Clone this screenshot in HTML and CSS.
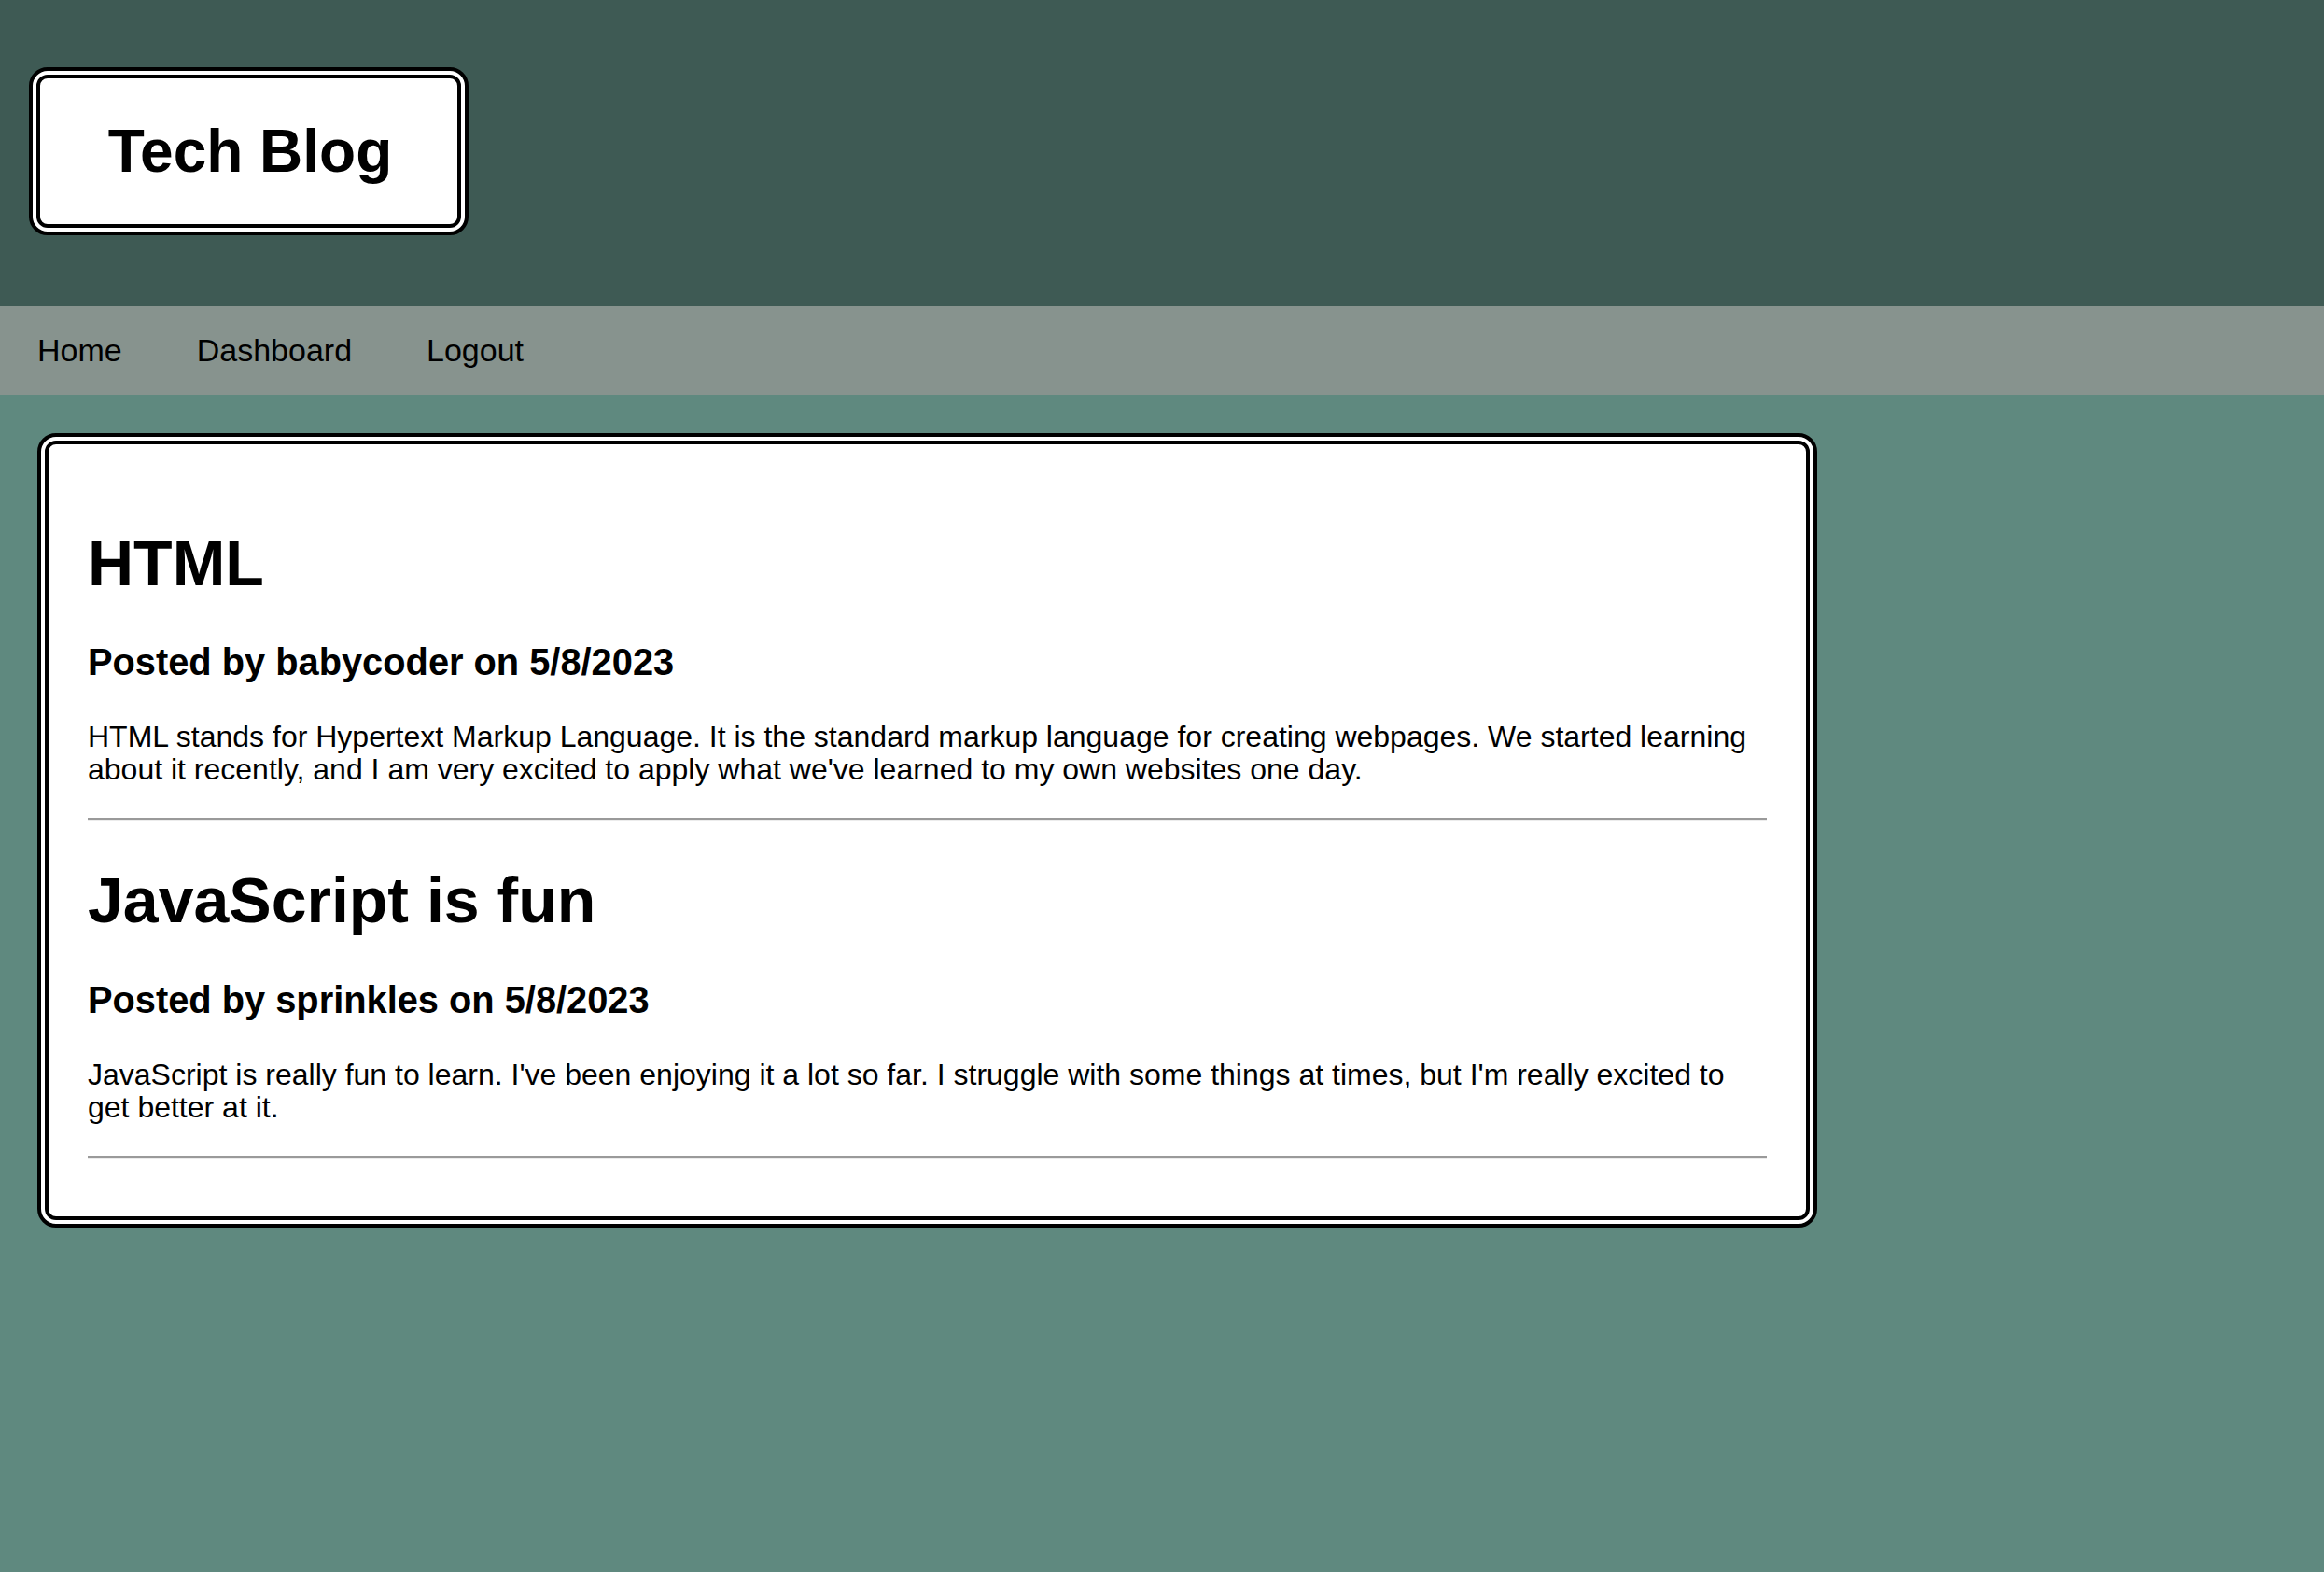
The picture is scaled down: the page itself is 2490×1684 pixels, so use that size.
FILE: index.html
```html
<!DOCTYPE html>
<html lang="en">
<head>
<meta charset="utf-8">
<title>Tech Blog</title>
<link rel="stylesheet" href="styles.css">
</head>
<body>
<header class="site-header">
  <div class="logo-box"><h1 class="logo">Tech Blog</h1></div>
</header>
<nav class="site-nav">
  <a href="#" class="nav-link">Home</a>
  <a href="#" class="nav-link">Dashboard</a>
  <a href="#" class="nav-link">Logout</a>
</nav>
<main class="main">
  <section class="card">
    <article class="post">
      <h1 class="post-title">HTML</h1>
      <h3 class="post-meta">Posted by babycoder on 5/8/2023</h3>
      <p class="post-body">HTML stands for Hypertext Markup Language. It is the standard markup language for creating webpages. We started learning about it recently, and I am very excited to apply what we've learned to my own websites one day.</p>
      <hr class="divider">
    </article>
    <article class="post">
      <h1 class="post-title">JavaScript is fun</h1>
      <h3 class="post-meta">Posted by sprinkles on 5/8/2023</h3>
      <p class="post-body">JavaScript is really fun to learn. I've been enjoying it a lot so far. I struggle with some things at times, but I'm really excited to get better at it.</p>
      <hr class="divider">
    </article>
  </section>
</main>
</body>
</html>
```

FILE: styles.css
```css
html, body {
  margin: 0;
  padding: 0;
}
body {
  font-family: "Liberation Sans", Arial, sans-serif;
  font-size: 34px;
  color: #000;
  background: #5f897f;
  min-height: 1684px;
}
.site-header {
  background: #3e5a54;
  padding: 72px 0 76px 31px;
  display: flex;
}
.logo-box {
  background: #fff;
  border: 12px double #000;
  border-radius: 20px;
  width: 471px;
  height: 180px;
  box-sizing: border-box;
  display: flex;
  align-items: center;
  justify-content: center;
  padding-left: 3px;
}
.logo {
  margin: 0;
  font-size: 64px;
  font-weight: bold;
}
.site-nav {
  background: #87938e;
  height: 95px;
  display: flex;
  align-items: center;
  gap: 80px;
  padding-left: 40px;
}
.nav-link {
  color: #000;
  text-decoration: none;
  font-size: 34px;
}
.main {
  padding: 41px 40px 40px 40px;
}
.card {
  width: 1907px;
  box-sizing: border-box;
  background: #fff;
  border: 12px double #000;
  border-radius: 20px;
  padding: 42px 42px 47px 42px;
}
.post-title {
  font-size: 68px;
  font-weight: bold;
  margin: 45.6px 0;
}
.post-meta {
  font-size: 39.8px;
  font-weight: bold;
  margin: 39.8px 0;
}
.post-body {
  font-size: 32px;
  line-height: 35.2px;
  margin: 30.6px 0;
}
.divider {
  border: 0;
  border-top: 2px solid #9a9a9a;
  border-bottom: 2px solid #ececec;
  height: 0;
  margin: 33.5px 0 14px 0;
}
```
